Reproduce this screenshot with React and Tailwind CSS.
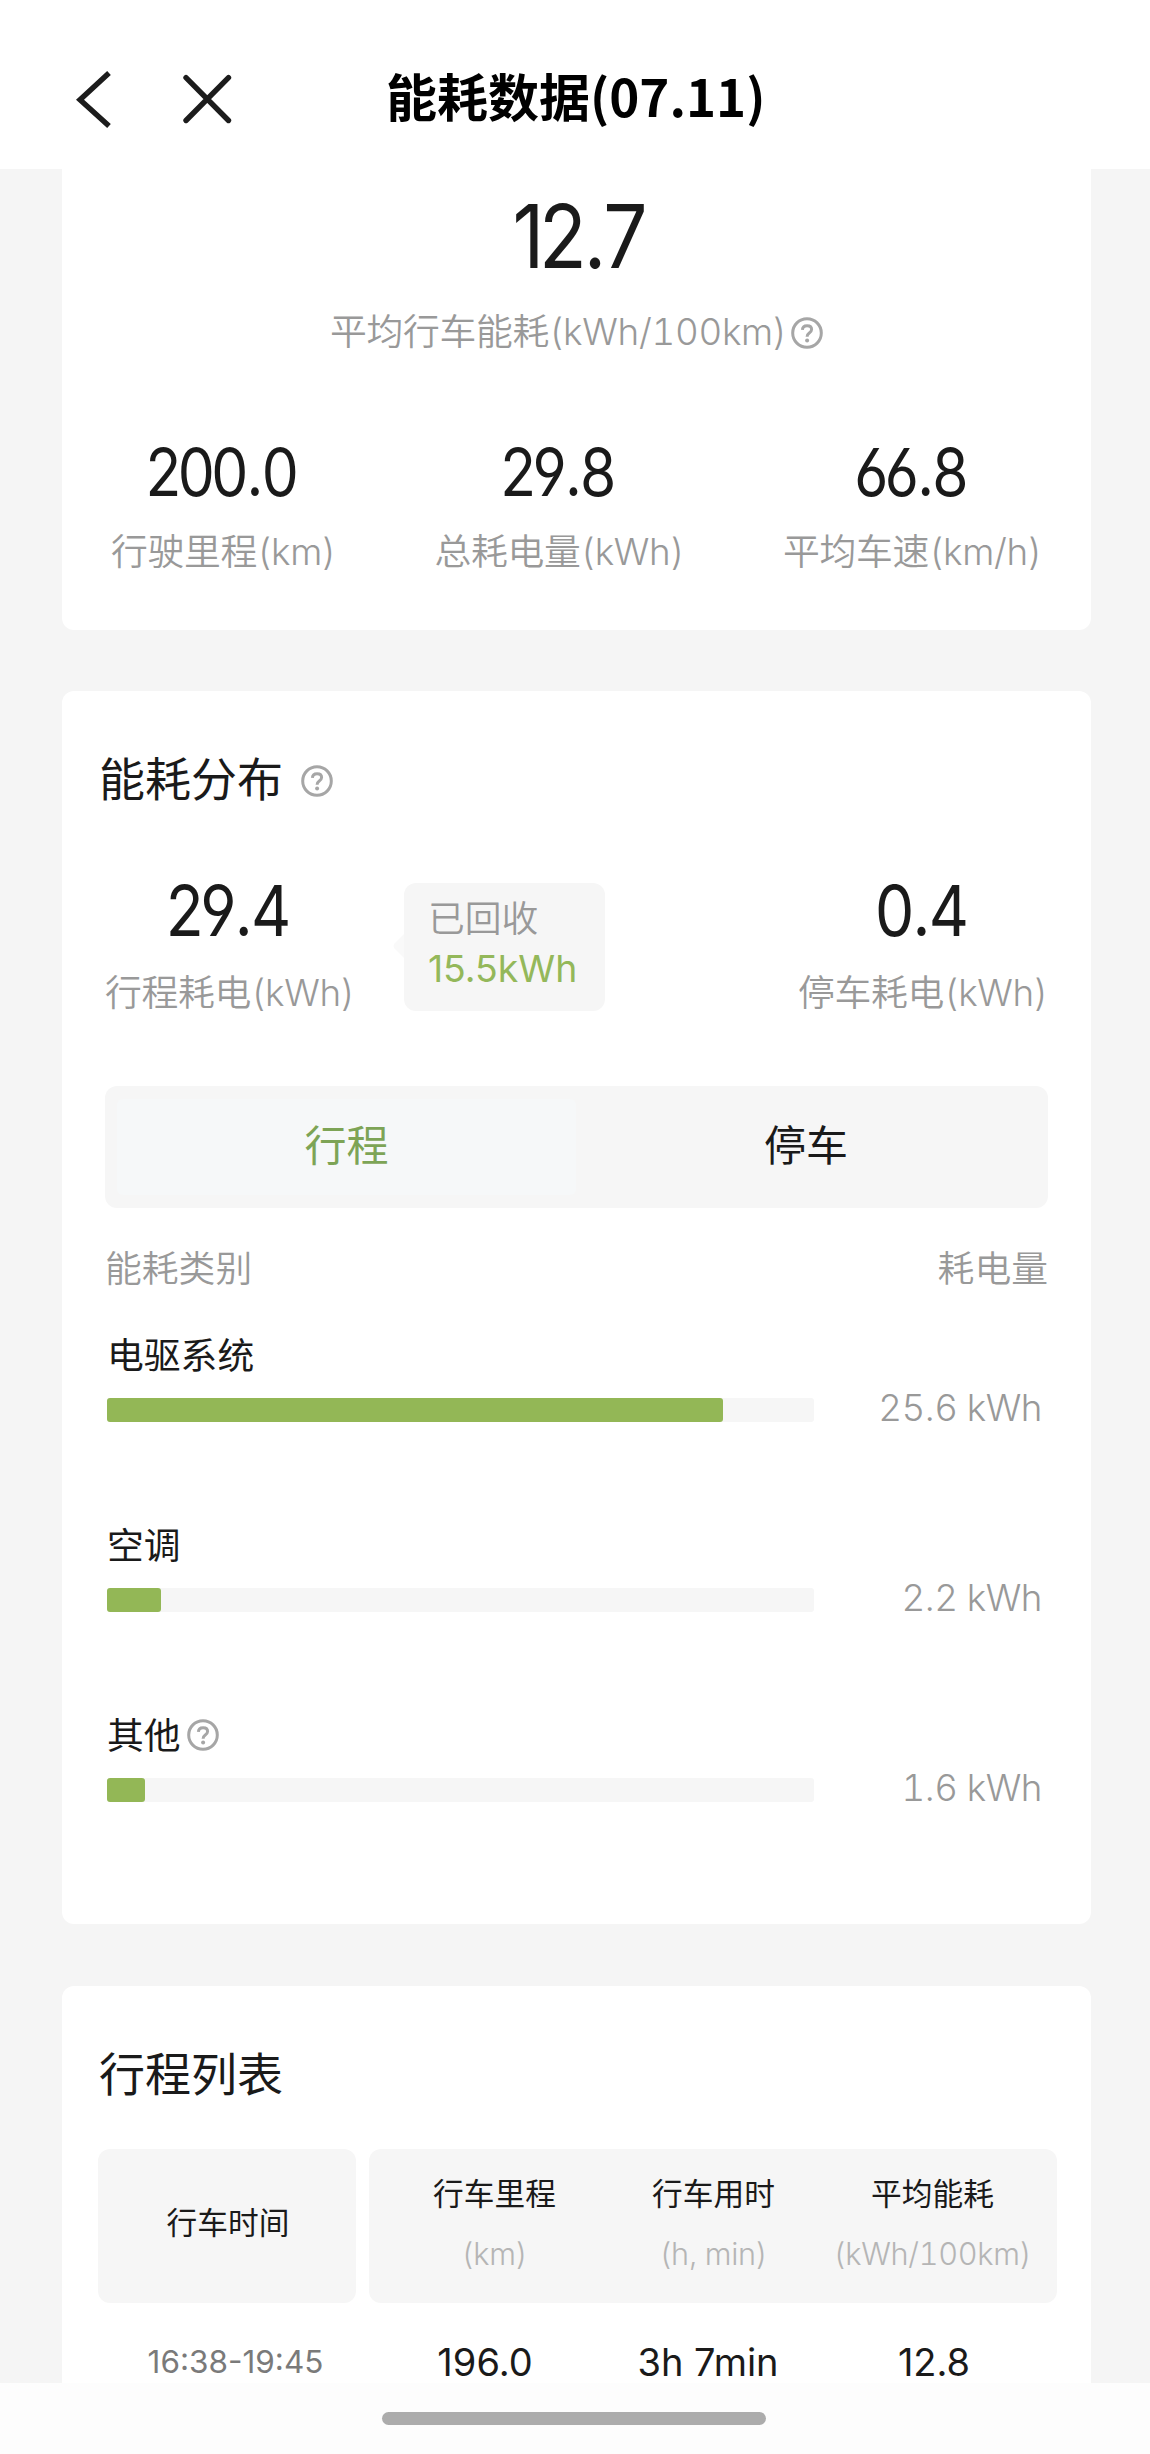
import React from 'react';

function HelpIcon({ className = '' }) {
  return (
    <svg viewBox="0 0 32 32" className={`h-8 w-8 shrink-0 ${className}`} fill="none" stroke="#a6a6a6">
      <circle cx="16" cy="16" r="14.3" strokeWidth="3" />
      <path d="M11.4 12.9 C11.5 10.2 13.4 8.7 16.1 8.7 C18.8 8.7 20.6 10.2 20.6 12.5 C20.6 14.3 19.4 15.2 18 16.2 C16.7 17.1 16.1 17.8 16.1 19.8" strokeWidth="3" />
      <circle cx="16.1" cy="23.4" r="2" fill="#a6a6a6" stroke="none" />
    </svg>
  );
}

function BigNumber({ value, className = '' }) {
  const [whole, decimal] = value.split('.');
  return (
    <div
      className={`origin-center scale-x-[0.89] pr-[6px] text-center font-normal text-[#1a1a1a] [font-feature-settings:'cv03','cv04'] [font-kerning:none] ${className}`}
    >
      {whole}
      <span className="mx-[0.03em]">.</span>
      {decimal}
    </div>
  );
}

function Label({ children, className = '' }) {
  return <div className={`whitespace-nowrap text-[36.8px] leading-[50px] tabular-nums text-[#999999] ${className}`}>{children}</div>;
}

function Stat({ value, label, size = 'text-[66px] leading-[66px]' }) {
  return (
    <div className="flex flex-col items-center">
      <BigNumber value={value} className={`tracking-[-4px] ${size}`} />
      <Label className="mt-[22px] tracking-[-0.3px]">{label}</Label>
    </div>
  );
}

const usage = [
  { name: '电驱系统', value: '25.6 kWh', width: 615.5 },
  { name: '空调', value: '2.2 kWh', width: 53.5 },
  { name: '其他', value: '1.6 kWh', width: 38, help: true },
];

const columns = [
  { title: '行车里程', unit: '(km)' },
  { title: '行车用时', unit: '(h, min)' },
  { title: '平均能耗', unit: '(kWh/100km)' },
];

export default function App() {
  return (
    <div className="flex h-[2454px] w-[1150px] flex-col overflow-hidden bg-[#f5f5f5] font-[350] [font-family:Inter,'Noto_Sans_CJK_SC',sans-serif]">
      <header className="flex h-[169px] shrink-0 items-center bg-white pt-[25px]">
        <svg viewBox="70 65 170 68" className="ml-[70px] mt-1 h-[68px] w-[170px]" fill="none" stroke="#1c1c1c">
          <path d="M109 73 L80 99.7 L109 126" strokeWidth="5.4" />
          <path d="M186 77.7 L228.5 120.5 M228.5 77.7 L186 120.5" strokeWidth="5.4" strokeLinecap="round" />
        </svg>
        <h1 className="mb-1 ml-[146px] whitespace-nowrap text-[51px] font-bold leading-[60px] text-black [font-family:'Noto_Sans_CJK_SC',sans-serif]">
          能耗数据(07.11)
        </h1>
      </header>

      <main className="flex min-h-0 flex-1 flex-col overflow-hidden pl-[62px] pr-[59px]">
        <section className="h-[461px] shrink-0 rounded-b-[12px] bg-white px-[49px] pt-[23px]">
          <BigNumber value="12.7" className="pl-2 text-[88px] leading-[88px] tracking-[-6px]" />
          <div className="mt-[27px] flex items-center justify-center">
            <Label className="tracking-[-0.3px]">平均行车能耗(kWh/100km)</Label>
            <HelpIcon className="mt-[2px] ml-1" />
          </div>
          <div className="mt-[82px] flex justify-between">
            <Stat value="200.0" label="行驶里程(km)" />
            <Stat value="29.8" label="总耗电量(kWh)" />
            <Stat value="66.8" label="平均车速(km/h)" />
          </div>
        </section>

        <section className="mt-[61px] h-[1233px] shrink-0 rounded-[12px] bg-white pt-[58px] pr-[43px] pl-[43px]">
          <div className="flex items-center">
            <h2 className="-ml-[6px] text-[46px] font-normal leading-[60px] text-[#1a1a1a]">能耗分布</h2>
            <HelpIcon className="mt-1 ml-[18px]" />
          </div>

          <div className="mt-[67px] flex">
            <Stat value="29.4" label="行程耗电(kWh)" size="text-[70px] leading-[70px]" />
            <div className="relative ml-[49px] mt-[7px] h-[128px] w-[201px] rounded-[12px] bg-[#f6f6f6] pt-[11px] pl-6">
              <svg viewBox="0 0 11 24" className="absolute top-[51px] -left-[11px] h-6 w-[11px]">
                <path d="M11 0 L1 10 Q0 12 1 14 L11 24 Z" fill="#f9f9f9" />
              </svg>
              <div className="text-[36.8px] leading-[50px] text-[#999999]">已回收</div>
              <div className="text-[37.4px] leading-[50px] font-normal text-[#94b85a]">15.5kWh</div>
            </div>
            <div className="ml-auto">
              <Stat value="0.4" label="停车耗电(kWh)" size="text-[70px] leading-[70px]" />
            </div>
          </div>

          <div className="mt-[68px] flex h-[122px] w-[943px] items-center rounded-[12px] bg-[#f6f6f6] pl-3 text-[42px] font-normal">
            <div className="flex h-[96px] w-[459px] items-center justify-center rounded-[6px] bg-[#f6f8f9] pb-1 text-[#7da456]">行程</div>
            <div className="flex h-[96px] flex-1 items-center justify-center pb-1 pr-[12px] text-[#1a1a1a]">停车</div>
          </div>

          <div className="mt-9 flex justify-between">
            <Label>能耗类别</Label>
            <Label>耗电量</Label>
          </div>

          <div className="mt-[37px] flex flex-col gap-[85px]">
            {usage.map((item) => (
              <div key={item.name} className="h-[105px] pl-[2px]">
                <div className="flex h-[50px] items-center text-[36.8px] font-normal leading-[50px] text-[#1a1a1a]">
                  {item.name}
                  {item.help && <HelpIcon className="mb-[2px] ml-[6px]" />}
                </div>
                <div className="mt-1 flex h-[50px] items-center justify-between pr-[6px]">
                  <div className="h-6 w-[707px] rounded-[3px] bg-[#f6f6f6]">
                    <div className="h-6 rounded-[3px] bg-[#93b756]" style={{ width: item.width }} />
                  </div>
                  <Label className="pb-1 tracking-[-0.5px]">{item.value}</Label>
                </div>
              </div>
            ))}
          </div>
        </section>

        <section className="mt-[62px] h-[600px] shrink-0 rounded-[12px] bg-white pr-[33px] pl-[36px] pt-[58px]">
          <h2 className="ml-px text-[46px] font-normal leading-[60px] text-[#1a1a1a]">行程列表</h2>
          <div className="mt-[45px] flex h-[154px] gap-[13px]">
            <div className="flex w-[258px] items-center justify-center rounded-[12px] bg-[#f6f6f6] pb-[5px] pl-[2px] text-[30.7px] font-normal text-[#1a1a1a]">
              行车时间
            </div>
            <div className="grid w-[688px] grid-cols-[219px_219px_219px] rounded-[12px] bg-[#f6f6f6] pt-[25px] pl-4">
              {columns.map((column) => (
                <div key={column.title} className="text-center text-[30.7px] leading-10">
                  <div className="font-normal text-[#1a1a1a]">{column.title}</div>
                  <div className="mt-5 tracking-[-0.3px] tabular-nums text-[#b5b5b5]">{column.unit}</div>
                </div>
              ))}
            </div>
          </div>
          <div className="mt-[39px] grid grid-cols-[275px_224px_222px_230px] text-center text-[38px] font-normal leading-10 text-[#1a1a1a]">
            <div className="text-[31.5px] text-[#7a7a7a]">16:38-19:45</div>
            <div>196.0</div>
            <div>3h 7min</div>
            <div>12.8</div>
          </div>
        </section>
      </main>

      <footer className="flex h-[71px] shrink-0 justify-center bg-[#fdfdfd] pt-[29px] pr-[2px]">
        <div className="h-[13px] w-[384px] rounded-full bg-[#acacac]" />
      </footer>
    </div>
  );
}
